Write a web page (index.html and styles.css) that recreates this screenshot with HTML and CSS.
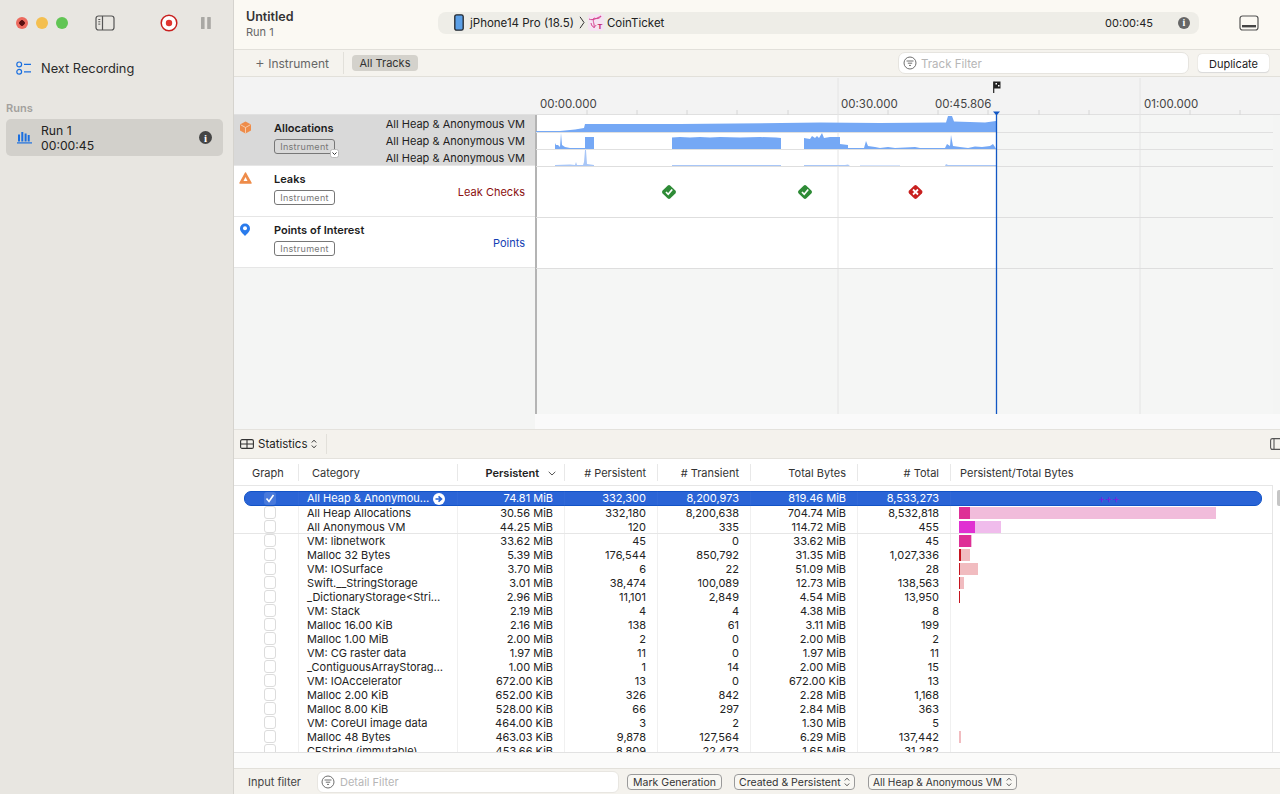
FILE: index.html
```html
<!DOCTYPE html>
<html lang="en">
<head>
<meta charset="utf-8">
<title>Instruments</title>
<link rel="stylesheet" href="styles.css">
</head>
<body>
<div class="app">
  <aside class="sidebar">
    <div class="win-bar">
      <div class="lights">
        <span class="light red"></span><span class="light yellow"></span><span class="light green"></span>
      </div>
      <svg class="side-toggle" width="20" height="16" viewBox="0 0 20 16"><rect x="1" y="1" width="18" height="14" rx="2.5" fill="none" stroke="#555" stroke-width="1.2"/><path d="M7.5 1v14" stroke="#555" stroke-width="1.2"/><path d="M3.3 4.5h2M3.3 6.8h2M3.3 9.1h2" stroke="#555" stroke-width="1"/></svg>
      <svg class="record" width="18" height="18" viewBox="0 0 18 18"><circle cx="9" cy="9" r="7.8" fill="#fff" stroke="#c8201f" stroke-width="1.5"/><circle cx="9" cy="9" r="3.2" fill="#e0342f"/></svg>
      <svg class="pause" width="10" height="12" viewBox="0 0 10 12"><rect x="0" y="0" width="3.6" height="12" rx=".6" fill="#a9a8a4"/><rect x="6.2" y="0" width="3.6" height="12" rx=".6" fill="#a9a8a4"/></svg>
    </div>
    <div class="next-rec">
      <svg width="16" height="15" viewBox="0 0 16 15"><circle cx="3.2" cy="3.4" r="2.4" fill="none" stroke="#1a6fe0" stroke-width="1.2"/><circle cx="3.2" cy="10.8" r="2.4" fill="none" stroke="#1a6fe0" stroke-width="1.2"/><path d="M8 3.4h7M8 10.8h7" stroke="#1a6fe0" stroke-width="1.2"/></svg>
      <span>Next Recording</span>
    </div>
    <div class="runs-label">Runs</div>
    <div class="run">
      <svg width="15" height="13" viewBox="0 0 15 13"><path d="M1 3.5h2v7H1zM4.3 1h2v9.500H4.300zM7.600 2.500h2v8h-2zM10.700 4h2v6.500h-2z" fill="#1a6fe0"/><rect x="0" y="11.300" width="15" height="1.200" fill="#1a6fe0"/></svg>
      <div class="run-text"><div>Run 1</div><div>00:00:45</div></div>
      <span class="info dark">i</span>
    </div>
  </aside>

  <main class="main">
    <header class="titlebar">
      <div class="doc"><div class="doc-title">Untitled</div><div class="doc-sub">Run 1</div></div>
      <div class="status">
        <svg class="phone" width="10" height="17" viewBox="0 0 10 17"><rect x=".8" y=".8" width="8.400" height="15.400" rx="1.800" fill="#5b9fe6" stroke="#22262c" stroke-width="1.300"/></svg>
        <span>jPhone14 Pro (18.5)</span>
        <svg class="crumb" width="6" height="13" viewBox="0 0 6 13"><path d="M1 .8l4 5.700-4 5.700" fill="none" stroke="#333" stroke-width="1"/></svg>
        <svg class="appicon" width="16" height="17" viewBox="0 0 16 17"><rect width="16" height="17" rx="3" fill="#f5e3f2"/><path d="M1 5c4 2 8-1 12-3-1 3-5 3-7 2-2 3 1 6 0 10M3 9c1 5 4 5 5 2" fill="none" stroke="#d6408f" stroke-width="1"/><text x="9.500" y="15" class="appicon-t">T</text></svg>
        <span>CoinTicket</span>
        <span class="status-time">00:00:45</span>
        <span class="info mid">i</span>
      </div>
      <svg class="panel-toggle" width="20" height="16" viewBox="0 0 20 16"><rect x="1" y="1" width="18" height="14" rx="2.500" fill="none" stroke="#555" stroke-width="1.200"/><rect x="3" y="10" width="14" height="2.400" fill="#444"/></svg>
    </header>

    <div class="toolbar">
      <div class="add-inst"><span class="plus">+</span> Instrument</div>
      <div class="tool-sep"></div>
      <div class="all-tracks">All Tracks</div>
      <div class="track-filter">
        <svg width="14" height="14" viewBox="0 0 14 14"><circle cx="7" cy="7" r="6" fill="none" stroke="#6f6f6f" stroke-width="1"/><path d="M3.500 5h7M4.800 7.200h4.400M6 9.400h2" stroke="#6f6f6f" stroke-width="1"/></svg>
        <span class="nudge">Track Filter</span>
      </div>
      <button class="dup">Duplicate</button>
    </div>

    <section class="timeline">
      <div class="ruler">
        <span class="tlabel" style="left:306px">00:00.000</span>
        <span class="tlabel" style="left:607px">00:30.000</span>
        <span class="tlabel" style="left:701px">00:45.806</span>
        <span class="tlabel" style="left:910px">01:00.000</span>
      </div>

      <div class="track">
        <div class="head selected">
          <svg class="ticon" width="13" height="13" viewBox="0 0 13 13"><path d="M6.500.5l5.500 3v6l-5.500 3-5.500-3v-6z" fill="#ee8c4a"/><path d="M1.500 3.700l5 2.800 5-2.800M6.500 6.500v6" fill="none" stroke="#f8d3b4" stroke-width=".9"/></svg>
          <div class="tname"><div class="tn">Allocations</div><span class="badge">Instrument<svg class="badge-chev" width="9" height="9" viewBox="0 0 9 9"><rect x=".5" y=".5" width="8" height="8" rx="2" fill="#fff" stroke="#bbb"/><path d="M2.500 3.500L4.500 5.500l2-2" fill="none" stroke="#333" stroke-width="1"/></svg></span></div>
          <div class="tlanes"><div>All Heap &amp; Anonymous VM</div><div>All Heap &amp; Anonymous VM</div><div>All Heap &amp; Anonymous VM</div></div>
        </div>
        <div class="lane"></div>
      </div>
      <div class="track">
        <div class="head">
          <svg class="ticon" width="13" height="12" viewBox="0 0 13 12"><path d="M6.500 1L12 11H1z" fill="#ee8c4a" stroke="#ee8c4a" stroke-width="1.500" stroke-linejoin="round"/><path d="M6.500 5L8.500 9h-4z" fill="#fff"/></svg>
          <div class="tname"><div class="tn">Leaks</div><span class="badge">Instrument</span></div>
          <div class="tside leak">Leak Checks</div>
        </div>
        <div class="lane"></div>
      </div>
      <div class="track">
        <div class="head">
          <svg class="ticon" width="12" height="13" viewBox="0 0 12 13"><path d="M6 13C2 9 1 7.500 1 5.500a5 5 0 0 1 10 0C11 7.500 10 9 6 13z" fill="#2a7bec"/><circle cx="6" cy="5.300" r="2" fill="#fff"/></svg>
          <div class="tname"><div class="tn">Points of Interest</div><span class="badge">Instrument</span></div>
          <div class="tside pts">Points</div>
        </div>
        <div class="lane"></div>
      </div>
      <div class="t-empty"><div class="t-empty-head"></div><div class="t-empty-lane"></div></div>
      <div class="t-foot"></div>

      <svg class="plot" width="746" height="353" viewBox="534 77 746 353">
        <g stroke="#d6d6d6" stroke-width="1">
          <path d="M587 110v5M637 110v5M687 110v5M737 110v5M788 110v5M888 110v5M938 110v5M988 110v5M1039 110v5M1089 110v5M1190 110v5M1240 110v5"/>
        </g>
        <path d="M838 78v336M1140 78v336" stroke="#e4e4e4" stroke-width="1"/>
        <path d="M536 132.500H1273M536 149.500H1273" stroke="#e0e0e0" stroke-width="1"/>
        <path fill="#75a8f5" d="M536 131L560 131 575 129.500 584 128 585 124 680 124 735 123.500 820 122.500 880 123 940 122.500 946 122.500 948 116 952 116 954 121.500 985 122.500 996 121V132H536z"/>
        <path fill="#75a8f5" d="M555 149V143L556 145 558 145 560 147 561 133 562 145 565 147 570 148 585 148V137H594V149zM672 149V137.500L680 137 690 137.500 700 137 710 137.500 720 137 740 137.500 760 137 776 137.500 781 138V149zM804 149V138L810 139 812 136 815 138 817 136 819 138 822 133 824 138 830 137 840 137 840 144 848 145 848 148 864 148 866 141 868 146 875 147 880 148 888 147 895 148 905 147.500 915 147 920 148 945 148 947 144 950 146 951 135 953 146 960 147 968 148 975 146.500 982 147 990 146 993 144 995 147 996 149z"/>
        <path fill="#a8c6f7" d="M555 166V165L570 164.500 575 165 576 162 577 165 583 165 584 162 585 150 586 150 587 164 594 165V166zM672 166V165H781V166zM804 166V165H845L848 164.500 850 166zM860 166V165.500H900V166zM945 166L946 164 948 165 996 165V166z"/>
        <path d="M536 166.500H1273M536 217.500H1273M536 268.500H1273" stroke="#dedede" stroke-width="1"/>
        <g>
          <g transform="translate(669 192)"><rect x="-5.500" y="-5.500" width="11" height="11" rx="2" transform="rotate(45)" fill="#2e8b36"/><path d="M-3 0l2.200 2.300L3.200-2.500" fill="none" stroke="#fff" stroke-width="1.700"/></g>
          <g transform="translate(805 192)"><rect x="-5.500" y="-5.500" width="11" height="11" rx="2" transform="rotate(45)" fill="#2e8b36"/><path d="M-3 0l2.200 2.300L3.200-2.500" fill="none" stroke="#fff" stroke-width="1.700"/></g>
          <g transform="translate(915.500 192)"><rect x="-5.500" y="-5.500" width="11" height="11" rx="2" transform="rotate(45)" fill="#c8201f"/><path d="M-2.500-2.500l5 5M2.500-2.500l-5 5" fill="none" stroke="#fff" stroke-width="1.800"/></g>
        </g>
        <path d="M996.500 113V414" stroke="#1257c4" stroke-width="1.300"/>
        <path d="M993 111.500h7l-3.500 4z" fill="#1257c4"/>
        <path d="M993.700 81.500V93" stroke="#222" stroke-width="1.200"/>
        <path d="M994 81.500h6.500v7H994z" fill="#222"/>
        <path d="M995.500 83h1.500v1.500h-1.500zM998 85h1.500v1.500H998z" fill="#fff"/>
      </svg>
    </section>

    <div class="detailbar">
      <div class="stats">
        <svg width="14" height="10" viewBox="0 0 14 10"><rect x=".6" y=".6" width="12.800" height="8.800" rx="1.500" fill="none" stroke="#333" stroke-width="1.100"/><path d="M7 .6v8.800M.6 5h12.800" stroke="#333" stroke-width="1.100"/></svg>
        <span>Statistics</span>
        <svg width="6" height="10" viewBox="0 0 6 10"><path d="M.8 3.500L3 1.200l2.200 2.300M.8 6.500L3 8.800l2.200-2.300" fill="none" stroke="#333" stroke-width="1"/></svg>
      </div>
      <div class="stats-sep"></div>
      <svg class="clip-icon" width="10" height="12" viewBox="0 0 10 12"><rect x=".6" y=".6" width="14" height="10.800" rx="2" fill="none" stroke="#555" stroke-width="1.100"/><path d="M4 .6v10.800" stroke="#555" stroke-width="1.100"/></svg>
    </div>

    <section class="table">
      <div class="thead">
        <div class="th c">Graph</div>
        <div class="th l cat-h">Category</div>
        <div class="th r strong">Persistent <svg class="sort" width="8" height="5" viewBox="0 0 8 5"><path d="M.7.8L4 4l3.300-3.200" fill="none" stroke="#555" stroke-width="1"/></svg></div>
        <div class="th r"># Persistent</div>
        <div class="th r"># Transient</div>
        <div class="th r">Total Bytes</div>
        <div class="th r"># Total</div>
        <div class="th l">Persistent/Total Bytes</div>
      </div>
      <div class="tbody">
        <div class="row sel"><div class="td chk"><i class="box on"><svg width="10" height="9" viewBox="0 0 10 9"><path d="M1.500 4.500l2.500 3 4.500-6.500" fill="none" stroke="#fff" stroke-width="1.600"/></svg></i></div><div class="td l cat"><span>All Heap &amp; Anonymou…</span><svg class="go" width="12" height="12" viewBox="0 0 12 12"><circle cx="6" cy="6" r="6" fill="#fff"/><path d="M2.500 6h5M5.500 3.300L8.500 6l-3 2.700" fill="none" stroke="#2a64d6" stroke-width="1.600"/></svg></div><div class="td r">74.81 MiB</div><div class="td r">332,300</div><div class="td r">8,200,973</div><div class="td r">819.46 MiB</div><div class="td r">8,533,273</div><div class="td bar"><span class="plus3">+++</span></div></div>
        <div class="row"><div class="td chk"><i class="box"></i></div><div class="td l">All Heap Allocations</div><div class="td r">30.56 MiB</div><div class="td r">332,180</div><div class="td r">8,200,638</div><div class="td r">704.74 MiB</div><div class="td r">8,532,818</div><div class="td bar"><span class="b lt-pink" style="width:257px"><span class="b dk-pink" style="width:11px"></span></span></div></div>
        <div class="row"><div class="td chk"><i class="box"></i></div><div class="td l">All Anonymous VM</div><div class="td r">44.25 MiB</div><div class="td r">120</div><div class="td r">335</div><div class="td r">114.72 MiB</div><div class="td r">455</div><div class="td bar"><span class="b lt-mag" style="width:42px"><span class="b dk-mag" style="width:16px"></span></span></div></div>
        <div class="row rule"><div class="td chk"><i class="box"></i></div><div class="td l">VM: libnetwork</div><div class="td r">33.62 MiB</div><div class="td r">45</div><div class="td r">0</div><div class="td r">33.62 MiB</div><div class="td r">45</div><div class="td bar"><span class="b lt-pink" style="width:13px"><span class="b dk-pink" style="width:12px"></span></span></div></div>
        <div class="row"><div class="td chk"><i class="box"></i></div><div class="td l">Malloc 32 Bytes</div><div class="td r">5.39 MiB</div><div class="td r">176,544</div><div class="td r">850,792</div><div class="td r">31.35 MiB</div><div class="td r">1,027,336</div><div class="td bar"><span class="b lt-red" style="width:11px"><span class="b dk-red" style="width:2px"></span></span></div></div>
        <div class="row"><div class="td chk"><i class="box"></i></div><div class="td l">VM: IOSurface</div><div class="td r">3.70 MiB</div><div class="td r">6</div><div class="td r">22</div><div class="td r">51.09 MiB</div><div class="td r">28</div><div class="td bar"><span class="b lt-red" style="width:19px"><span class="b dk-red" style="width:1px"></span></span></div></div>
        <div class="row"><div class="td chk"><i class="box"></i></div><div class="td l">Swift.__StringStorage</div><div class="td r">3.01 MiB</div><div class="td r">38,474</div><div class="td r">100,089</div><div class="td r">12.73 MiB</div><div class="td r">138,563</div><div class="td bar"><span class="b lt-red" style="width:5px"><span class="b dk-red" style="width:1px"></span></span></div></div>
        <div class="row"><div class="td chk"><i class="box"></i></div><div class="td l">_DictionaryStorage&lt;Stri…</div><div class="td r">2.96 MiB</div><div class="td r">11,101</div><div class="td r">2,849</div><div class="td r">4.54 MiB</div><div class="td r">13,950</div><div class="td bar"><span class="b lt-red" style="width:1px"><span class="b dk-red" style="width:1px"></span></span></div></div>
        <div class="row"><div class="td chk"><i class="box"></i></div><div class="td l">VM: Stack</div><div class="td r">2.19 MiB</div><div class="td r">4</div><div class="td r">4</div><div class="td r">4.38 MiB</div><div class="td r">8</div><div class="td bar"></div></div>
        <div class="row"><div class="td chk"><i class="box"></i></div><div class="td l">Malloc 16.00 KiB</div><div class="td r">2.16 MiB</div><div class="td r">138</div><div class="td r">61</div><div class="td r">3.11 MiB</div><div class="td r">199</div><div class="td bar"></div></div>
        <div class="row"><div class="td chk"><i class="box"></i></div><div class="td l">Malloc 1.00 MiB</div><div class="td r">2.00 MiB</div><div class="td r">2</div><div class="td r">0</div><div class="td r">2.00 MiB</div><div class="td r">2</div><div class="td bar"></div></div>
        <div class="row"><div class="td chk"><i class="box"></i></div><div class="td l">VM: CG raster data</div><div class="td r">1.97 MiB</div><div class="td r">11</div><div class="td r">0</div><div class="td r">1.97 MiB</div><div class="td r">11</div><div class="td bar"></div></div>
        <div class="row"><div class="td chk"><i class="box"></i></div><div class="td l">_ContiguousArrayStorag…</div><div class="td r">1.00 MiB</div><div class="td r">1</div><div class="td r">14</div><div class="td r">2.00 MiB</div><div class="td r">15</div><div class="td bar"></div></div>
        <div class="row"><div class="td chk"><i class="box"></i></div><div class="td l">VM: IOAccelerator</div><div class="td r">672.00 KiB</div><div class="td r">13</div><div class="td r">0</div><div class="td r">672.00 KiB</div><div class="td r">13</div><div class="td bar"></div></div>
        <div class="row"><div class="td chk"><i class="box"></i></div><div class="td l">Malloc 2.00 KiB</div><div class="td r">652.00 KiB</div><div class="td r">326</div><div class="td r">842</div><div class="td r">2.28 MiB</div><div class="td r">1,168</div><div class="td bar"></div></div>
        <div class="row"><div class="td chk"><i class="box"></i></div><div class="td l">Malloc 8.00 KiB</div><div class="td r">528.00 KiB</div><div class="td r">66</div><div class="td r">297</div><div class="td r">2.84 MiB</div><div class="td r">363</div><div class="td bar"></div></div>
        <div class="row"><div class="td chk"><i class="box"></i></div><div class="td l">VM: CoreUI image data</div><div class="td r">464.00 KiB</div><div class="td r">3</div><div class="td r">2</div><div class="td r">1.30 MiB</div><div class="td r">5</div><div class="td bar"></div></div>
        <div class="row"><div class="td chk"><i class="box"></i></div><div class="td l">Malloc 48 Bytes</div><div class="td r">463.03 KiB</div><div class="td r">9,878</div><div class="td r">127,564</div><div class="td r">6.29 MiB</div><div class="td r">137,442</div><div class="td bar"><span class="b lt-red" style="width:2px"></span></div></div>
        <div class="row"><div class="td chk"><i class="box"></i></div><div class="td l">CFString (immutable)</div><div class="td r">453.66 KiB</div><div class="td r">8,809</div><div class="td r">22,473</div><div class="td r">1.65 MiB</div><div class="td r">31,282</div><div class="td bar"></div></div>
      </div>
      <div class="scroll-thumb"></div>
    </section>

    <div class="gap"></div>

    <footer class="filterbar">
      <span class="if-label nudge">Input filter</span>
      <div class="detail-filter">
        <svg width="14" height="14" viewBox="0 0 14 14"><circle cx="7" cy="7" r="6" fill="none" stroke="#6f6f6f" stroke-width="1"/><path d="M3.500 5h7M4.800 7.200h4.400M6 9.400h2" stroke="#6f6f6f" stroke-width="1"/></svg>
        <span class="nudge">Detail Filter</span>
      </div>
      <div class="fbtn mark"><span class="nudge">Mark Generation</span></div>
      <div class="fbtn created"><span class="nudge">Created &amp; Persistent</span> <svg width="6" height="10" viewBox="0 0 6 10"><path d="M.8 3.500L3 1.200l2.200 2.300M.8 6.500L3 8.800l2.200-2.300" fill="none" stroke="#555" stroke-width="1"/></svg></div>
      <div class="fbtn heap"><span class="nudge">All Heap &amp; Anonymous VM</span> <svg width="6" height="10" viewBox="0 0 6 10"><path d="M.8 3.500L3 1.200l2.200 2.300M.8 6.500L3 8.800l2.200-2.300" fill="none" stroke="#555" stroke-width="1"/></svg></div>
    </footer>
  </main>
</div>
</body>
</html>
```

FILE: styles.css
```css
* { box-sizing: border-box; }
html, body { margin: 0; height: 100%; overflow: hidden; }
body { font-family: Inter, "Liberation Sans", sans-serif; font-size: 11px; font-weight: 420; color: #222; background: #fff; }
.app { display: flex; width: 1280px; height: 794px; }
.nudge { display: block; padding-top: 1px; }

/* Sidebar */
.sidebar { width: 234px; flex: none; background: #e8e6e1; border-right: 1px solid #d5d3ce; padding: 0 10px 0 6px; }
.win-bar { display: flex; align-items: center; height: 46px; padding-left: 10px; }
.lights { display: flex; gap: 8px; }
.light { width: 12px; height: 12px; border-radius: 50%; display: block; }
.light.red { background: radial-gradient(circle, #5a1010 0 2.5px, #ec6a5e 3px); }
.light.yellow { background: #f4bf4f; }
.light.green { background: #61c554; }
.side-toggle { margin-left: 27px; }
.record { margin-left: 45px; }
.pause { margin-left: 23px; }
.next-rec { display: flex; align-items: center; gap: 9px; height: 16px; margin: 14px 0 0 10px; font-size: 12.800px; color: #2a2a2a; }
.runs-label { margin-top: 25px; font-size: 11px; font-weight: 600; color: #a3a19d; line-height: 14px; }
.run { display: flex; align-items: center; height: 37px; margin-top: 4px; background: #d2d0cb; border-radius: 5px; padding: 0 10px 0 11px; width: 217px; }
.run-text { margin-left: 9px; font-size: 12.200px; line-height: 15px; color: #222; flex: 1; }
.info { display: flex; align-items: center; justify-content: center; border-radius: 50%; color: #fff; font-weight: 700; font-family: "Liberation Serif", serif; }
.info.dark { width: 13px; height: 13px; background: #454545; font-size: 11px; margin-left: auto; margin-right: 1px; }
.info.mid { width: 12px; height: 12px; background: #666; font-size: 10px; margin-left: 25px; }

/* Main */
.main { flex: 1; min-width: 0; display: flex; flex-direction: column; background: #fff; }
.titlebar { height: 50px; flex: none; display: flex; align-items: center; background: #fbf9f3; border-bottom: 1px solid #e2e0da; padding-left: 12px; }
.doc { width: 192px; flex: none; }
.doc-title { font-size: 12.500px; font-weight: 600; line-height: 16px; color: #333; margin-top: -2px; }
.doc-sub { font-size: 11px; line-height: 14px; color: #666; }
.status { width: 761px; height: 22px; flex: none; display: flex; align-items: center; background: #eeede7; border-radius: 8px; padding: 0 9px 0 16px; font-size: 11.500px; color: #222; margin-top: -4px; }
.phone { margin-right: 6px; }
.crumb { margin: 0 3px 0 5px; }
.appicon { margin-right: 3px; }
.appicon-t { font-size: 8px; font-weight: 700; fill: #c2256f; font-family: "Liberation Sans", sans-serif; }
.status-time { margin-left: auto; font-size: 11px; }
.panel-toggle { margin-left: 40px; margin-top: -4px; }

.toolbar { height: 27px; flex: none; display: flex; align-items: center; background: #f5f3ee; border-bottom: 1px solid #e2e0da; padding-left: 21px; font-size: 12px; }
.add-inst { color: #666; width: 88px; white-space: nowrap; }
.plus { font-size: 15px; font-weight: 300; line-height: 12px; }
.tool-sep { width: 1px; height: 22px; background: #e2e0da; }
.all-tracks { margin-left: 8px; width: 66px; height: 16px; background: #d4d2cc; border-radius: 4px; font-size: 11px; line-height: 16px; text-align: center; color: #333; }
.track-filter { margin-left: 480px; width: 291px; height: 22px; display: flex; align-items: center; gap: 4px; padding-left: 4px; background: #fff; border: 1px solid #e6e4df; border-radius: 7px; color: #b6b6b6; font-size: 11.500px; }
.dup { margin-left: 9px; width: 71px; height: 18px; padding: 1px 0 0; background: #fff; border: 0; border-radius: 4px; box-shadow: 0 0 1px #b9b7b2, 0 1px 1px #ddd; font: inherit; font-size: 11px; color: #222; }

/* Timeline */
.timeline { position: relative; height: 353px; flex: none; background: #f4f5f4; display: flex; flex-direction: column; }
.ruler { position: relative; height: 38px; flex: none; background: #f3f3f3; border-bottom: 1px solid #e0e0e0; }
.tlabel { position: absolute; top: 20px; font-size: 11.500px; line-height: 14px; color: #444; }
.track { display: flex; height: 51px; flex: none; }
.head { position: relative; width: 301px; flex: none; display: flex; background: #fff; border-bottom: 1px solid #e6e6e6; padding-left: 40px; }
.head.selected { background: #d9d9d9; }
.ticon { position: absolute; left: 5px; top: 6px; }
.tname { padding-top: 6px; }
.tn { font-size: 11px; font-weight: 600; line-height: 14px; color: #1c1c1c; white-space: nowrap; }
.badge { position: relative; display: block; width: 61px; height: 15px; margin-top: 4px; border: 1px solid #777; border-radius: 3px; font-size: 9px; line-height: 13px; text-align: center; color: #777; letter-spacing: .3px; }
.badge-chev { position: absolute; right: -5px; bottom: -5px; }
.tlanes { margin-left: auto; padding: 1px 10px 0 0; text-align: right; font-size: 11px; line-height: 17px; color: #222; white-space: nowrap; }
.tside { margin-left: auto; padding: 2px 10px 0 0; align-self: center; font-size: 11px; }
.leak { color: #8b1010; }
.pts { color: #1340b4; }
.lane { flex: 1; margin-left: 2px; margin-right: 7px; background: linear-gradient(90deg, #fff 460px, #f5f6f5 460px); }
.t-empty { flex: 1; display: flex; }
.t-empty-head { width: 301px; }
.t-empty-lane { flex: 1; margin: 0 7px 0 2px; background: #f5f6f5; }
.t-foot { height: 16px; flex: none; background: linear-gradient(90deg, #f4f5f4 301px, #fafafa 301px); border-bottom: 1px solid #e4e2dd; }
.timeline::before { content: ""; position: absolute; left: 301px; top: 1px; bottom: 16px; width: 2px; background: #b4b4b4; }
.plot { position: absolute; right: 0; top: 0; display: block; }

/* Detail bar */
.detailbar { height: 29px; flex: none; display: flex; align-items: center; background: #f4f2ed; border-bottom: 1px solid #e4e2dd; padding-left: 6px; position: relative; overflow: hidden; }
.stats { display: flex; align-items: center; gap: 4px; font-size: 11.500px; color: #222; }
.stats-sep { width: 1px; height: 20px; background: #e2e0da; margin-left: 9px; }
.clip-icon { margin-left: auto; margin-right: 0; }

/* Table */
.table { position: relative; height: 294px; flex: none; background: #fff; overflow: hidden; border-bottom: 1px solid #e2e2e2; }
.thead, .row { display: grid; grid-template-columns: 64px 159px 107px 93px 93px 107px 93px 323px; }
.thead { height: 27px; border-bottom: 1px solid #e6e6e6; width: 1039px; align-items: center; }
.th { height: 17px; line-height: 19px; border-left: 1px solid #e8e8e8; padding: 0 11px 0 9px; font-size: 11px; color: #333; white-space: nowrap; }
.th:first-child { border-left: 0; }
.th.c { padding: 0 0 0 18px; }
.th.l { padding-left: 9px; }
.th.cat-h { padding-left: 13px; }
.th.r { text-align: right; }
.th.strong { font-weight: 600; color: #222; padding-right: 8px; }
.sort { margin-left: 6px; vertical-align: 1px; }
.tbody { padding-top: 5px; width: 1039px; border-right: 1px solid #e6e6e6; height: 267px; overflow: hidden; }
.row { position: relative; height: 14px; }
.row.sel { height: 15px; color: #fff; }
.row.sel::before { content: ""; position: absolute; left: 10px; right: 10px; top: 0; bottom: 0; background: #2a64d6; border: 1px solid #1253c6; border-radius: 7px; }
.row.rule { box-shadow: 0 -1px 0 #e6e6e6; }
.td { position: relative; border-left: 1px solid #f0f0f0; font-size: 11px; line-height: 14px; white-space: nowrap; overflow: hidden; color: inherit; }
.row.sel .td { border-left-color: rgba(255,255,255,.03); line-height: 15px; }
.td.chk { border-left: 0; padding-left: 30px; overflow: visible; }
.td.l { padding-left: 8px; }
.td.r { text-align: right; padding-right: 11px; }
.td.cat { display: flex; align-items: center; gap: 4px; }
.td.bar { padding-left: 8px; }
.box { display: block; width: 12px; height: 13px; background: #fff; border: 1px solid #dcdcdc; border-radius: 3px; }
.box.on { background: rgba(255,255,255,.14); border-color: transparent; margin-top: 1px; display: flex; align-items: center; justify-content: center; }
.b { display: block; height: 12px; }
.td.bar > .b { margin-top: 1px; }
.lt-pink { background: #f1bcdb; }
.dk-pink { background: #de2f96; }
.lt-mag { background: #f0bcec; }
.dk-mag { background: #e030d2; }
.lt-red { background: #f1bcc0; }
.dk-red { background: #c5141f; }
.plus3 { position: absolute; left: 147px; top: 1px; color: #7a20e0; font-size: 11px; }
.scroll-thumb { position: absolute; right: 0; top: 31px; width: 3px; height: 16px; background: #c5c5c5; border-radius: 2px 0 0 2px; }

.gap { height: 15px; flex: none; background: #fbfbfa; }
.filterbar { flex: 1; display: flex; align-items: center; background: #f4f2ed; border-top: 1px solid #e2e0da; padding-left: 14px; font-size: 11px; color: #444; }
.if-label { width: 69px; }
.detail-filter { width: 302px; height: 22px; display: flex; align-items: center; gap: 5px; padding-left: 3px; background: #fff; border: 1px solid #e8e6e1; border-radius: 6px; color: #b6b6b6; }
.fbtn { height: 16px; display: flex; align-items: center; justify-content: space-between; padding: 0 4px; border: 1px solid #9a9a9a; border-radius: 4px; font-size: 10.500px; color: #333; background: #f8f7f3; white-space: nowrap; }
.mark { margin-left: 8px; width: 95px; justify-content: center; }
.created { margin-left: 12px; width: 121px; }
.heap { margin-left: 13px; width: 149px; font-size: 10.200px; }
```
